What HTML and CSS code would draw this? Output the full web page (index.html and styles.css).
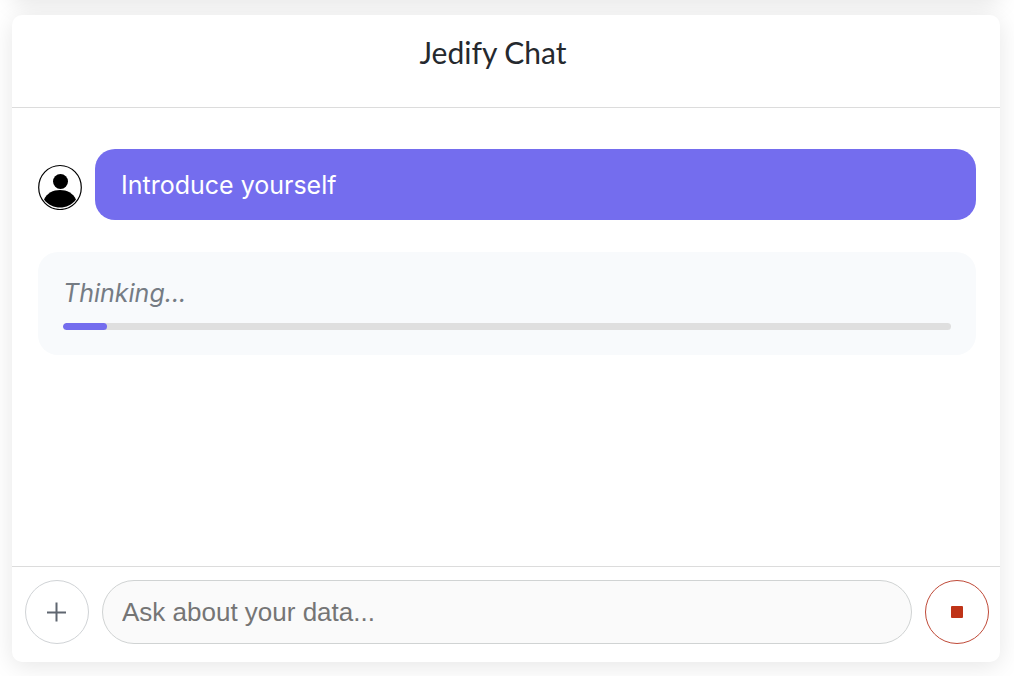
FILE: index.html
```html
<!DOCTYPE html>
<html lang="en">
<head>
<meta charset="utf-8">
<meta name="viewport" content="width=device-width, initial-scale=1">
<title>Jedify Chat</title>
<link rel="stylesheet" href="styles.css">
</head>
<body>
  <div class="panel-above"></div>
  <main class="chat">
    <header class="chat-header">
      <h1>Jedify Chat</h1>
    </header>

    <div class="messages">
      <div class="message-row">
        <svg class="avatar" viewBox="0 0 44 46" aria-hidden="true">
          <ellipse cx="22" cy="23.500" rx="21.3" ry="22" fill="#fff" stroke="#000" stroke-width="1.2"/>
          <circle cx="22.5" cy="17.500" r="7.5"/>
          <path d="M6 35.500C9 29 15 26 22 26S35 29 38 35.500C34 41 28 43.500 22 43.500S10 41 6 35.500Z"/>
        </svg>
        <div class="bubble">Introduce yourself</div>
      </div>

      <div class="thinking">
        <label for="progress">Thinking...</label>
        <progress id="progress" value="5" max="100"></progress>
      </div>
    </div>

    <form class="composer" action="#">
      <button type="button" class="round-btn" aria-label="Add">
        <svg width="20" height="20" viewBox="0 0 20 20" aria-hidden="true">
          <path d="M9.500 .5v19M0 10.500h19" fill="none" stroke="#5f6670" stroke-width="2"/>
        </svg>
      </button>
      <input type="text" class="question" placeholder="Ask about your data..." aria-label="Ask about your data">
      <button type="button" class="round-btn stop-btn" aria-label="Stop">
        <svg width="12" height="12" viewBox="0 0 12 12" aria-hidden="true">
          <rect width="12" height="12" rx="1" fill="#bf3317"/>
        </svg>
      </button>
    </form>
  </main>
</body>
</html>
```
FILE: styles.css
```css
* {
  box-sizing: border-box;
}

body {
  margin: 0;
  min-height: 100vh;
  padding: 0 14px 14px 12px;
  display: flex;
  flex-direction: column;
  background: #fff;
  color: #25292e;
  font-family: Inter, "Liberation Sans", sans-serif;
  font-size: 25px;
  line-height: 36px;
}

.panel-above,
.chat {
  box-shadow: 0 4px 24px rgba(0, 0, 0, 0.1);
}

/* bottom edge of the panel scrolled off the top */
.panel-above {
  height: 40px;
  margin: -40px 0 15px;
  border-radius: 10px;
}

.chat {
  flex: 1;
  display: flex;
  flex-direction: column;
  border-radius: 10px;
  background: #fff;
}

.chat-header {
  padding: 19px 50px 37px 24px;
  border-bottom: 1px solid #dcdcdc;
  text-align: center;
}

.chat-header h1 {
  margin: 0;
  font-family: Lato, "Liberation Sans", sans-serif;
  font-size: 30px;
  font-weight: 400;
}

/* messages */
.messages {
  flex: 1;
  display: flex;
  flex-direction: column;
  gap: 32px;
  padding: 41px 24px 24px 26px;
}

.message-row {
  display: flex;
  align-items: center;
  gap: 13px;
}

.avatar {
  width: 44px;
  height: 46px;
  margin-top: 4px;
}

.bubble {
  flex: 1;
  padding: 18px 26px 17px;
  border-radius: 20px;
  background: #746dee;
  color: #fff;
}

.thinking {
  padding: 23px 25px 25px;
  border-radius: 20px;
  background: #f8fafc;
  color: #757c84;
  font-style: italic;
}

.thinking label {
  display: block;
}

.thinking progress {
  display: block;
  width: 100%;
  height: 7px;
  margin-top: 12px;
  border: 0;
  border-radius: 4px;
  overflow: hidden;
  background: #dfdfdf;
  appearance: none;
}

.thinking progress::-webkit-progress-bar {
  background: #dfdfdf;
}

.thinking progress::-webkit-progress-value {
  border-radius: 4px;
  background: #746dee;
}

/* composer */
.composer {
  display: flex;
  gap: 13px;
  padding: 13px 11px 18px 13px;
  border-top: 1px solid #dcdcdc;
}

.round-btn {
  display: flex;
  align-items: center;
  justify-content: center;
  flex: none;
  width: 64px;
  height: 64px;
  padding: 0;
  border: 1px solid #d0d3d6;
  border-radius: 50%;
  background: #fff;
}

.stop-btn {
  border-color: #bf4a38;
}

.question {
  flex: 1;
  min-width: 0;
  height: 64px;
  padding: 0 19px;
  border: 1px solid #d0d3d3;
  border-radius: 32px;
  background: #fafafa;
  color: #25292e;
  font-family: "Liberation Sans", Arial, sans-serif;
  font-size: 26px;
}

.question::placeholder {
  color: #757575;
}
```
